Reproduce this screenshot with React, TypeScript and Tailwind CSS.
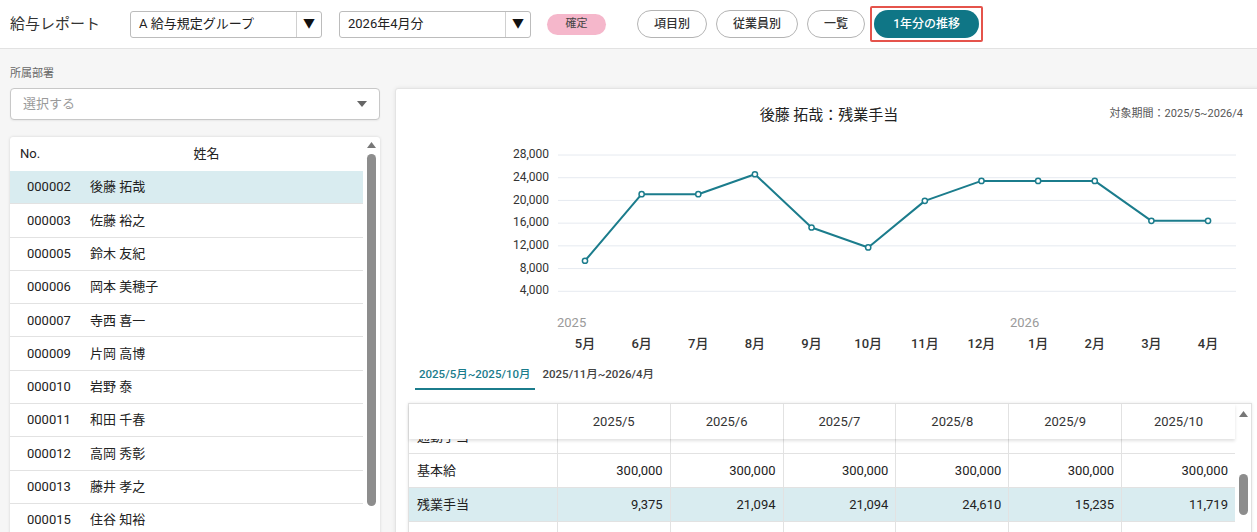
import React from 'react';

const employees = [
  { no: '000002', name: '後藤 拓哉', active: true },
  { no: '000003', name: '佐藤 裕之' },
  { no: '000005', name: '鈴木 友紀' },
  { no: '000006', name: '岡本 美穂子' },
  { no: '000007', name: '寺西 喜一' },
  { no: '000009', name: '片岡 高博' },
  { no: '000010', name: '岩野 泰' },
  { no: '000011', name: '和田 千春' },
  { no: '000012', name: '高岡 秀彰' },
  { no: '000013', name: '藤井 孝之' },
  { no: '000015', name: '住谷 知裕' },
];

const months = ['5月', '6月', '7月', '8月', '9月', '10月', '11月', '12月', '1月', '2月', '3月', '4月'];
const values = [9375, 21094, 21094, 24610, 15235, 11719, 19922, 23438, 23438, 23438, 16406, 16406];
const ticks = [4000, 8000, 12000, 16000, 20000, 24000, 28000];

const cols = ['2025/5', '2025/6', '2025/7', '2025/8', '2025/9', '2025/10'];
const rows = [
  { label: '通勤手当', vals: ['', '', '', '', '', ''] },
  { label: '基本給', vals: ['300,000', '300,000', '300,000', '300,000', '300,000', '300,000'] },
  { label: '残業手当', vals: ['9,375', '21,094', '21,094', '24,610', '15,235', '11,719'], active: true },
  { label: '', vals: ['', '', '', '', '', ''] },
];

// chart coords are relative to the svg (panel x 395, y 140)
const xOf = (i: number) => 189 + i * 56.64;
const yOf = (v: number) => 174 - (v * 159) / 28000;

function Chart() {
  const pts = values.map((v, i) => `${xOf(i)},${yOf(v)}`).join(' ');
  return (
    <svg width="868" height="222" className="block">
      {ticks.map((t) => (
        <g key={t}>
          <line x1="162" x2="840" y1={yOf(t)} y2={yOf(t)} stroke="#e6eaf0" strokeWidth="1" />
          <text x="153" y={yOf(t)} textAnchor="end" dominantBaseline="middle" fontSize="12" fill="#333">
            {t.toLocaleString('en-US')}
          </text>
        </g>
      ))}
      <polyline points={pts} fill="none" stroke="#1b7c8c" strokeWidth="2" strokeLinejoin="round" />
      {values.map((v, i) => (
        <circle key={i} cx={xOf(i)} cy={yOf(v)} r="2.6" fill="#fff" stroke="#1b7c8c" strokeWidth="1.5" />
      ))}
      <text x="161" y="184" dominantBaseline="middle" fontSize="13" fill="#9a9a9a">2025</text>
      <text x="614" y="184" dominantBaseline="middle" fontSize="13" fill="#9a9a9a">2026</text>
      {months.map((m, i) => (
        <text key={m} x={xOf(i)} y="205" textAnchor="middle" dominantBaseline="middle" fontSize="13" fontWeight="500" fill="#333">
          {m}
        </text>
      ))}
    </svg>
  );
}

function Select({ label }: { label: string }) {
  return (
    <div className="flex h-[27px] w-[192px] items-stretch rounded-[3px] border border-[#bcbcbc] bg-white">
      <div className="flex flex-1 items-center pl-[8px] text-[13px] text-[#222]">{label}</div>
      <div className="flex w-[25px] items-center justify-center border-l border-[#d0d0d0] text-[12px] text-[#111]">▼</div>
    </div>
  );
}

export default function App() {
  return (
    <div className="h-[532px] w-[1257px] overflow-hidden bg-[#f6f6f6] text-[#222] [font-family:Roboto,'Noto_Sans_CJK_JP',sans-serif]">
      {/* top bar */}
      <div className="flex h-[49px] items-center border-b border-[#e2e2e2] bg-white pl-[10px]">
        <div className="w-[120px] text-[15px] text-[#333]">給与レポート</div>
        <Select label="A 給与規定グループ" />
        <div className="ml-[17px]">
          <Select label="2026年4月分" />
        </div>
        <div className="ml-[16px] flex h-[21px] w-[59px] items-center justify-center rounded-full bg-[#f5b7cb] text-[11px] text-[#444]">確定</div>
        <div className="ml-[31px] flex items-center gap-[9px]">
          {['項目別', '従業員別', '一覧'].map((b) => (
            <div key={b} className="flex h-[28px] items-center rounded-full border border-[#b4b4b4] bg-white px-[16px] text-[12px] font-medium text-[#333]">
              {b}
            </div>
          ))}
          <div className="-ml-[4px] rounded-[2px] border-2 border-[#e5534b] p-[2px]">
            <div className="flex h-[28px] w-[105px] items-center justify-center rounded-full bg-[#0f7686] text-[12px] font-medium text-white">1年分の推移</div>
          </div>
        </div>
      </div>

      <div className="flex">
        {/* left column */}
        <div className="w-[395px] shrink-0 px-[10px] pt-[17px]">
          <div className="h-[15px] text-[11px] leading-[15px] text-[#666]">所属部署</div>
          <div className="mt-[7px] flex h-[32px] w-[370px] items-center justify-between rounded-[4px] border border-[#c8c8c8] bg-white pl-[12px] pr-[12px] shadow-[0_1px_2px_rgba(0,0,0,0.06)]">
            <span className="text-[13px] text-[#9a9a9a]">選択する</span>
            <svg width="10" height="6" viewBox="0 0 10 6"><path d="M0 0h10L5 6z" fill="#666" /></svg>
          </div>
          <div className="mt-[17px] flex h-[420px] w-[370px] rounded-[3px] bg-white shadow-[0_0_3px_rgba(0,0,0,0.15)]">
            <div className="flex-1">
              <div className="flex h-[34px] items-center text-[13px] text-[#222]">
                <span className="w-[80px] pl-[10px]">No.</span>
                <span className="w-[233px] text-center">姓名</span>
              </div>
              {employees.map((e) => (
                <div key={e.no} className={`flex h-[33.3px] items-center border-b border-[#e2e2e2] text-[13px] text-[#222] ${e.active ? 'bg-[#d9ecf0]' : 'bg-white'}`}>
                  <span className="w-[80px] pl-[17px]">{e.no}</span>
                  <span>{e.name}</span>
                </div>
              ))}
            </div>
            <div className="flex w-[17px] flex-col items-center pt-[5px]">
              <svg width="9" height="6" viewBox="0 0 9 6"><path d="M4.5 0L9 6H0z" fill="#777" /></svg>
              <div className="mt-[6px] h-[352px] w-[9px] rounded-full bg-[#8d8d8d]" />
            </div>
          </div>
        </div>

        {/* right panel */}
        <div className="mt-[39px] h-[460px] w-[868px] shrink-0 rounded-[3px] border border-[#e4e4e4] bg-white shadow-[0_0_4px_rgba(0,0,0,0.08)]">
          <div className="relative h-[51px]">
            <div className="pt-[16px] text-center text-[15px] leading-[20px] text-[#222]">後藤 拓哉：残業手当</div>
            <div className="absolute right-[19px] top-[16px] text-[11px] leading-[18px] text-[#555]">対象期間：2025/5~2026/4</div>
          </div>
          <Chart />
          <div className="flex h-[28px] items-end gap-[8px] pl-[19px]">
            <div className="border-b-2 border-[#1b7c8c] px-[4px] pb-[5px] text-[11.5px] font-medium text-[#1b7c8c]">2025/5月~2025/10月</div>
            <div className="pb-[7px] text-[11.5px] font-medium text-[#444]">2025/11月~2026/4月</div>
          </div>
          <div className="ml-[12px] mt-[13px] flex w-[844px] border border-[#e0e0e0] bg-white shadow-[0_0_3px_rgba(0,0,0,0.1)]">
            <div className="w-[826px]">
              <div className="relative z-10 flex h-[35px] bg-white text-[13px] text-[#333] shadow-[0_2px_3px_rgba(0,0,0,0.12)]">
                <div className="w-[149px] border-r border-[#e2e2e2]" />
                {cols.map((c) => (
                  <div key={c} className="flex w-[113px] items-center justify-center border-r border-[#e2e2e2] last:border-r-0">{c}</div>
                ))}
              </div>
              <div className="h-[100px] overflow-hidden">
                <div className="-mt-[19px]">
                  {rows.map((r, i) => (
                    <div key={i} className={`flex h-[34px] border-b border-[#e2e2e2] text-[13px] text-[#222] ${r.active ? 'bg-[#d9ecf0]' : 'bg-white'}`}>
                      <div className="flex w-[149px] items-center border-r border-[#e2e2e2] pl-[8px]">{r.label}</div>
                      {r.vals.map((v, j) => (
                        <div key={j} className="flex w-[113px] items-center justify-end border-r border-[#e2e2e2] pr-[7px] last:border-r-0">{v}</div>
                      ))}
                    </div>
                  ))}
                </div>
              </div>
            </div>
            <div className="flex w-[17px] flex-col items-center pt-[7px]">
              <svg width="9" height="6" viewBox="0 0 9 6"><path d="M4.5 0L9 6H0z" fill="#777" /></svg>
              <div className="mt-[57px] h-[41px] w-[9px] rounded-full bg-[#8d8d8d]" />
            </div>
          </div>
        </div>
      </div>
    </div>
  );
}
